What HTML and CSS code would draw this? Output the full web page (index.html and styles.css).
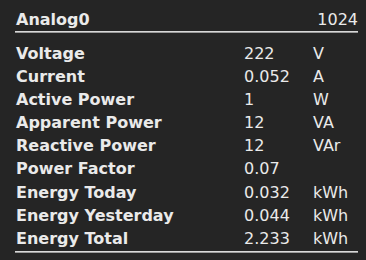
FILE: index.html
```html
<!DOCTYPE html>
<html>
<head>
<meta charset="utf-8">
<link rel="stylesheet" href="styles.css">
</head>
<body>
<div class="panel">
  <div class="head">
    <span class="title">Analog0</span>
    <span class="count">1024</span>
  </div>
  <div class="rule"></div>
  <div class="grid">
    <span class="lbl">Voltage</span><span>222</span><span>V</span>
    <span class="lbl">Current</span><span>0.052</span><span>A</span>
    <span class="lbl">Active Power</span><span>1</span><span>W</span>
    <span class="lbl">Apparent Power</span><span>12</span><span>VA</span>
    <span class="lbl">Reactive Power</span><span>12</span><span>VAr</span>
    <span class="lbl">Power Factor</span><span>0.07</span><span></span>
    <span class="lbl">Energy Today</span><span>0.032</span><span>kWh</span>
    <span class="lbl">Energy Yesterday</span><span>0.044</span><span>kWh</span>
    <span class="lbl">Energy Total</span><span>2.233</span><span>kWh</span>
  </div>
  <div class="rule bottom"></div>
</div>
</body>
</html>
```
FILE: styles.css
```css
html, body {
  margin: 0;
  background: #252525;
}
body {
  padding: 8px 8px 0 15px;
  font-family: "DejaVu Sans", Verdana, sans-serif;
  font-size: 16px;
  color: #eaeaea;
}
.panel {
  width: 343px;
}
.head {
  display: flex;
  justify-content: space-between;
  line-height: 23px;
  padding-left: 1px;
}
.title {
  font-weight: bold;
}
.rule {
  height: 1px;
  border-top: 1px solid #d8d8d8;
  background: #9a9a9a;
  margin-bottom: 9px;
}
.rule.bottom {
  margin: 1px 0 0;
}
.grid {
  display: grid;
  grid-template-columns: 228px 69px auto;
  line-height: 23.1px;
  padding-left: 1px;
}
.lbl {
  font-weight: bold;
}
```
